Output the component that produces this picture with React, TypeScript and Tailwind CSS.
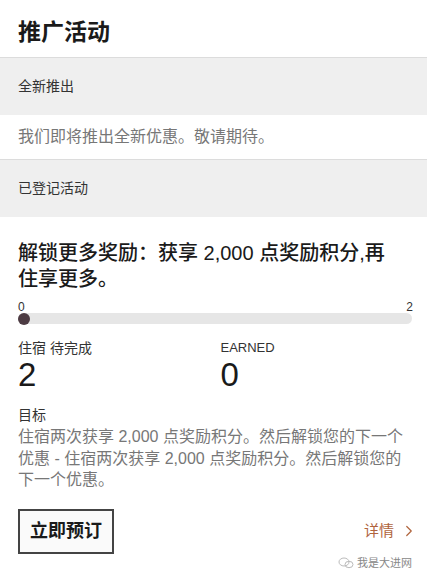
import { ChevronRight } from 'lucide-react';

const font = { fontFamily: '"Liberation Sans", "Noto Sans CJK SC", sans-serif' };

export default function App() {
  return (
    <div className="relative w-[427px] h-[580px] bg-white overflow-hidden text-[#222]" style={font}>
      {/* header */}
      <div className="h-[58px] px-[18px] pt-[8px] flex items-center border-b border-[#dcdcdc]">
        <h1 className="text-[23px] font-bold leading-none text-[#1a1a1a]">推广活动</h1>
      </div>

      {/* new offers */}
      <div className="h-[57px] px-[18px] flex items-center bg-[#efefef]">
        <span className="text-[14px] text-[#333]">全新推出</span>
      </div>
      <div className="h-[45px] px-[18px] flex items-center border-b border-[#dcdcdc]">
        <span className="text-[16px] text-[#777]">我们即将推出全新优惠。敬请期待。</span>
      </div>

      {/* registered */}
      <div className="h-[57px] px-[18px] flex items-center bg-[#efefef]">
        <span className="text-[14px] text-[#333]">已登记活动</span>
      </div>

      <div className="px-[18px] pt-[23px]">
        <h2 className="text-[20px] leading-[26px] font-medium text-[#1a1a1a] pr-[14px]">
          解锁更多奖励：获享 2,000 点奖励积分,再住享更多。
        </h2>

        {/* progress */}
        <div className="mt-[9px] flex justify-between text-[12px] leading-[12px] text-[#333]">
          <span>0</span>
          <span className="-mr-[4px]">2</span>
        </div>
        <div className="h-[11px] rounded-full bg-[#e6e6e6] -mr-[3px] flex items-center">
          <div className="w-[12px] h-[12px] rounded-full bg-[#4d3b43]" />
        </div>

        {/* stats */}
        <div className="mt-[15px] grid grid-cols-2">
          <div>
            <div className="text-[14px] leading-[18px] text-[#333]">住宿 待完成</div>
            <div className="text-[33px] leading-[36px] text-[#1a1a1a]">2</div>
          </div>
          <div className="pl-[7px]">
            <div className="text-[13px] leading-[18px] text-[#333]">EARNED</div>
            <div className="text-[33px] leading-[36px] text-[#1a1a1a]">0</div>
          </div>
        </div>

        {/* goal */}
        <div className="mt-[13px] text-[14px] leading-[18px] text-[#333]">目标</div>
        <p className="mt-[2px] text-[16px] leading-[21.5px] text-[#777] pr-[4px]">
          住宿两次获享 2,000 点奖励积分。然后解锁您的下一个优惠 - 住宿两次获享 2,000 点奖励积分。然后解锁您的下一个优惠。
        </p>

        {/* actions */}
        <div className="mt-[18px] flex items-center justify-between">
          <button className="w-[96px] h-[45px] border-2 border-[#444] bg-[#fafafa] text-[18px] font-bold text-[#1a1a1a]">
            立即预订
          </button>
          <div className="flex items-center gap-[6px] -mr-[9px] text-[15px] text-[#b0643d]">
            详情
            <ChevronRight size={18} strokeWidth={1.6} />
          </div>
        </div>
      </div>

      {/* watermark */}
      <div className="absolute right-[15px] bottom-[10px] flex items-center gap-[3px] text-[11px] leading-[14px] text-[#888]">
        <svg width="16" height="12" viewBox="0 0 16 12" fill="none" stroke="#bbb" strokeWidth="1">
          <ellipse cx="6" cy="5" rx="5" ry="4" />
          <ellipse cx="11" cy="7.5" rx="4" ry="3.2" />
        </svg>
        我是大进网
      </div>
    </div>
  );
}
